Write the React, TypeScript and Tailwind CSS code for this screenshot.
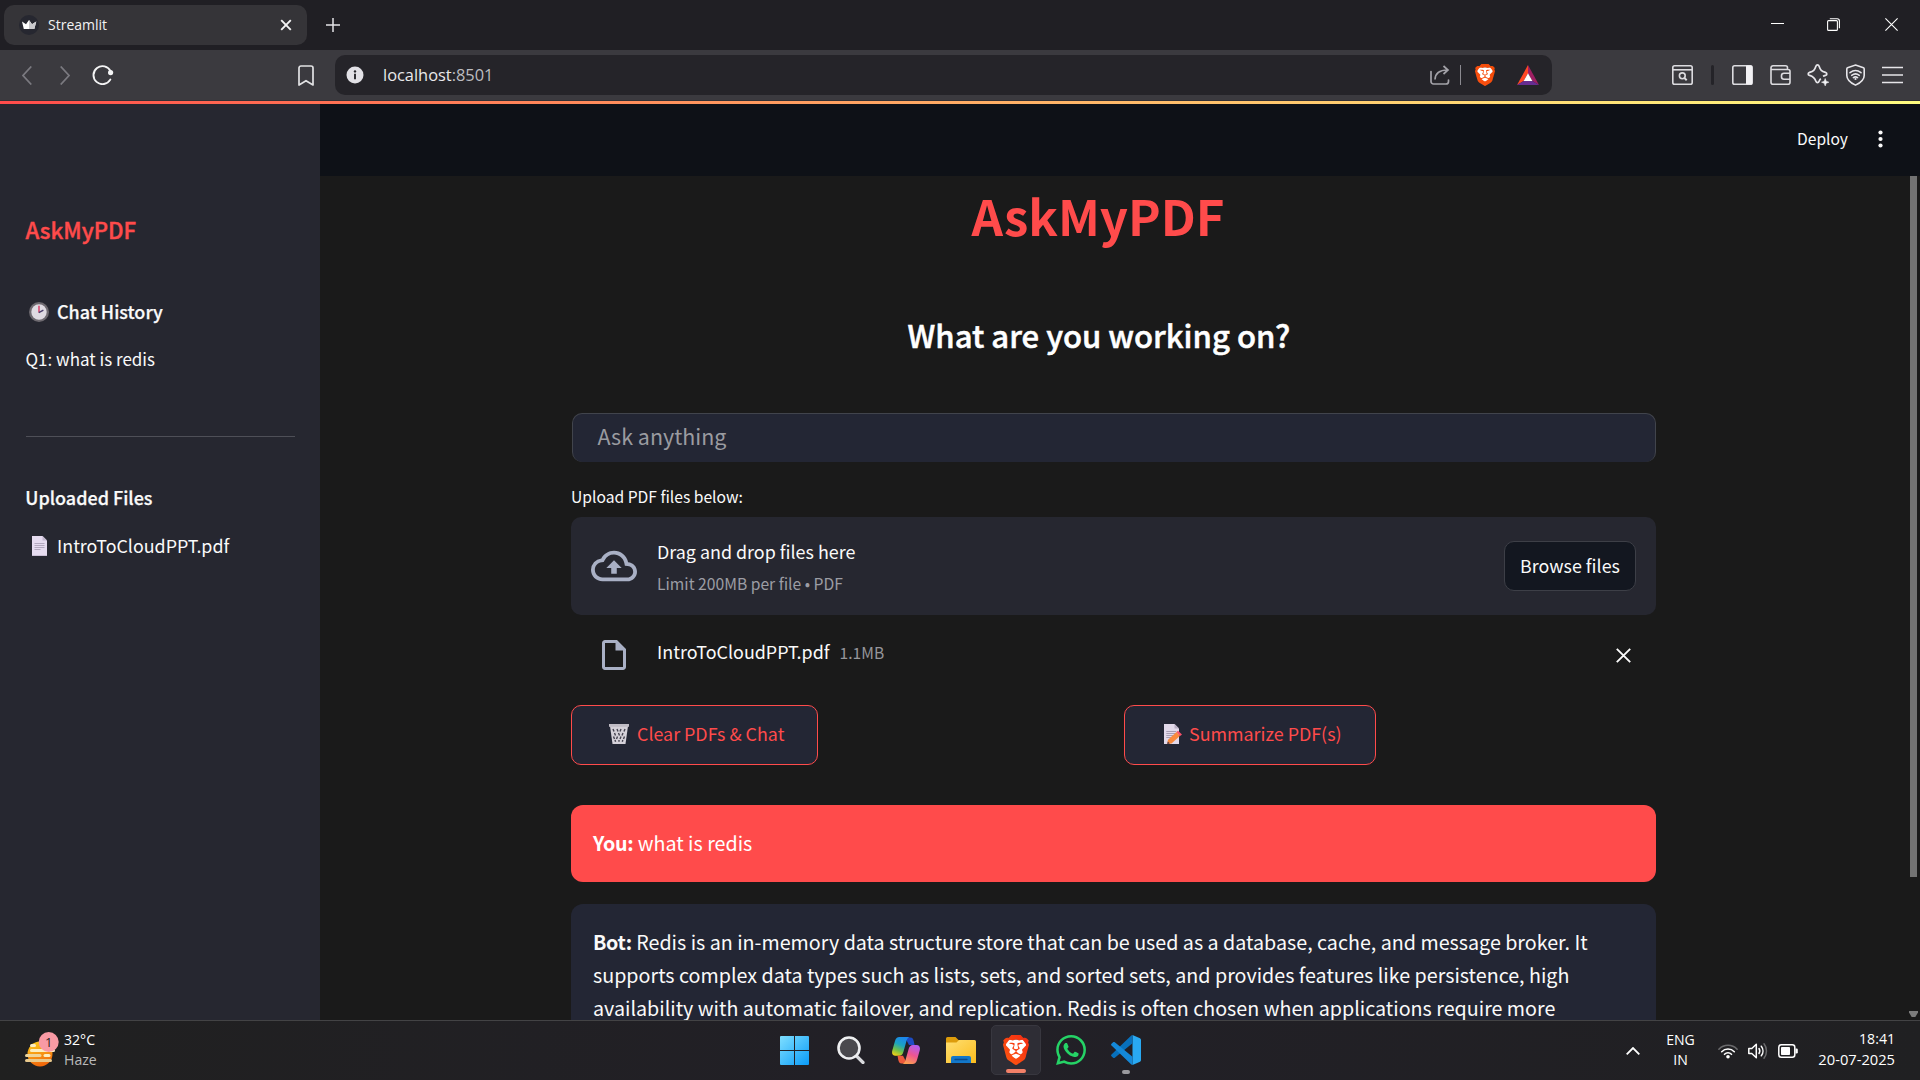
import type { ReactNode } from 'react';
import { SiWhatsapp } from 'react-icons/si';

const UI = "font-['Open_Sans',sans-serif]";

const BRAVE =
  'M15.68 0l2.096 2.38s1.84-.512 2.709.358c.868.87 1.584 1.638 1.584 1.638l-.562 1.381.715 2.047s-2.104 7.98-2.35 8.955c-.486 1.919-.818 2.66-2.198 3.633-1.38.972-3.884 2.66-4.293 2.916-.409.256-.92.692-1.38.692-.46 0-.97-.436-1.38-.692a185.796 185.796 0 01-4.293-2.916c-1.38-.973-1.712-1.714-2.197-3.633-.247-.975-2.351-8.955-2.351-8.955l.715-2.047-.562-1.381s.716-.768 1.585-1.638c.868-.87 2.708-.358 2.708-.358L8.321 0h7.36zm-3.679 14.936c-.14 0-1.038.317-1.758.69-.72.373-1.242.637-1.409.742-.167.104-.065.301.087.409.152.107 2.194 1.69 2.393 1.866.198.175.489.464.687.464.198 0 .49-.29.688-.464.198-.175 2.24-1.759 2.392-1.866.152-.108.254-.305.087-.41-.167-.104-.689-.368-1.41-.741-.72-.373-1.617-.69-1.757-.69zm0-11.278s-.409.001-1.022.206-1.278.46-1.584.46c-.307 0-2.581-.434-2.581-.434S4.119 7.152 4.119 7.849c0 .697.339.881.68 1.243l2.02 2.149c.192.203.59.511.356 1.066-.235.555-.58 1.26-.196 1.977.384.716 1.042 1.194 1.464 1.115.421-.08 1.412-.598 1.776-.834.364-.237 1.518-1.19 1.518-1.554 0-.365-1.193-1.02-1.413-1.168-.22-.15-1.226-.725-1.247-.95-.02-.227-.012-.293.284-.851.297-.559.831-1.304.742-1.8-.089-.495-.95-.753-1.565-.986-.615-.232-1.799-.671-1.947-.74-.148-.068-.11-.133.339-.175.448-.043 1.719-.212 2.292-.052.573.16 1.552.403 1.632.532.079.13.149.134.067.579-.081.445-.5 2.581-.541 2.96-.04.38-.12.63.288.724.409.094 1.097.256 1.333.256s.924-.162 1.333-.256c.408-.093.329-.344.288-.723-.04-.38-.46-2.516-.541-2.961-.082-.445-.012-.45.067-.579.08-.129 1.059-.372 1.632-.532.573-.16 1.845.009 2.292.052.449.042.487.107.339.175-.148.069-1.332.508-1.947.74-.615.233-1.476.49-1.565.986-.09.496.445 1.241.742 1.8.297.558.304.624.284.85-.02.226-1.026.802-1.247.95-.22.15-1.413.804-1.413 1.169 0 .364 1.154 1.317 1.518 1.554.364.236 1.355.755 1.776.834.422.079 1.08-.4 1.464-1.115.384-.716.039-1.422-.195-1.977-.235-.555.163-.863.355-1.066l2.02-2.149c.341-.362.68-.546.68-1.243 0-.697-2.695-3.96-2.695-3.96s-2.274.436-2.58.436c-.307 0-.972-.256-1.585-.461-.613-.205-1.022-.206-1.022-.206z';

function Brave({ className, from, to, id }: { className: string; from: string; to: string; id: string }) {
  return (
    <svg viewBox="1.8 0 20.4 24" preserveAspectRatio="none" className={className}>
      <defs>
        <linearGradient id={id} x1="0" y1="1" x2="1" y2="0">
          <stop offset="0" stopColor={from} />
          <stop offset="1" stopColor={to} />
        </linearGradient>
      </defs>
      <path d="M4 3.5h16v8l-3 7-5 2-5-2-3-7z" fill="#fff" />
      <path d={BRAVE} fill={`url(#${id})`} />
    </svg>
  );
}

/* ---------- browser chrome ---------- */

function TitleBar() {
  return (
    <div className={`flex h-[50px] shrink-0 items-center bg-[#201f24] pb-px ${UI}`}>
      <div className="ml-1 mt-px flex h-10 w-[303px] items-center rounded-[10px] bg-[#353438] pl-[15px] pr-[15px]">
        <svg viewBox="0 0 20 20" className="size-5">
          <circle cx="10" cy="10" r="10" fill="#262730" />
          <path d="M3 6.5l4 2.7L10 5l3 4.2 4.3-2.7-2 7.5H4.8z" fill="#fff" />
          <path d="M10 5l3 4.2 4.3-2.7-2 7.5H10z" fill="#c9c9cd" />
        </svg>
        <span className="ml-[9px] text-[14px] leading-5 text-[#f2f2f3]">Streamlit</span>
        <svg viewBox="0 0 12 12" className="ml-auto size-3" stroke="#f4f4f5" strokeWidth="1.9" fill="none">
          <path d="M1.2 1.2l9.6 9.6M10.8 1.2L1.2 10.8" />
        </svg>
      </div>
      <svg viewBox="0 0 14 14" className="ml-[19px] size-[14px]" stroke="#e4e4e6" strokeWidth="1.5" fill="none">
        <path d="M7 0v14M0 7h14" />
      </svg>
      <div className="ml-auto flex items-center pr-[22px]">
        <svg viewBox="0 0 13 13" className="size-[13px]" stroke="#fff" fill="none">
          <path d="M0 5.5h13" />
        </svg>
        <svg viewBox="0 0 13 13" className="ml-[43px] size-[13px]" stroke="#fff" strokeWidth="1.1" fill="none">
          <rect x=".6" y="2.6" width="9.8" height="9.8" rx="1" />
          <path d="M2.8 .7h7.4a2.2 2.2 0 0 1 2.2 2.2v7.4" />
        </svg>
        <svg viewBox="0 0 13 13" className="ml-[45px] size-[13px]" stroke="#fff" strokeWidth="1.1" fill="none">
          <path d="M.4 .4l12.2 12.2M12.6 .4L.4 12.6" />
        </svg>
      </div>
    </div>
  );
}

function ToolBar() {
  return (
    <div className={`flex h-[51px] shrink-0 items-center border-b border-[#323136] bg-[#3b3a3f] ${UI}`}>
      <svg viewBox="0 0 10 19" className="ml-[22px] h-[19px] w-[10px]" stroke="#7b7a80" strokeWidth="1.7" fill="none">
        <path d="M9.3 .5L1 9.5l8.3 9" />
      </svg>
      <svg viewBox="0 0 10 19" className="ml-[28px] h-[19px] w-[10px]" stroke="#7b7a80" strokeWidth="1.7" fill="none">
        <path d="M.7 .5L9 9.5l-8.3 9" />
      </svg>
      <svg viewBox="0 0 22 20" className="ml-[22px] h-[20px] w-[22px]" stroke="#f4f4f5" strokeWidth="1.9" fill="none">
        <path d="M18.6 6.2A9 9 0 1 0 18.3 14.6" strokeLinecap="round" />
        <circle cx="18.6" cy="7.6" r="2.6" fill="#f4f4f5" stroke="none" />
      </svg>
      <svg viewBox="0 0 16 21" className="ml-[184px] h-[21px] w-[16px]" stroke="#e2e2e4" strokeWidth="1.7" fill="none">
        <path d="M1 3a2 2 0 0 1 2-2h10a2 2 0 0 1 2 2v17l-7-4.3L1 20z" strokeLinejoin="round" />
      </svg>
      <div className="ml-[21px] flex h-10 w-[1217px] items-center rounded-[10px] bg-[#252429] pl-[11px] pr-[13px]">
        <svg viewBox="0 0 18 18" className="size-[18px]">
          <circle cx="9" cy="9" r="8.5" fill="#e2e1e6" />
          <circle cx="9" cy="5.4" r="1.2" fill="#252429" />
          <path d="M9 7.8v5.4" stroke="#252429" strokeWidth="1.9" />
        </svg>
        <span className="ml-[19px] pb-px text-[16.4px] leading-6 text-[#e9e9eb]">
          localhost<span className="text-[#bcbcc0]">:8501</span>
        </span>
        <svg viewBox="0 0 20 20" className="ml-auto size-5" stroke="#a3a2a8" strokeWidth="1.7" fill="none">
          <path d="M1 6.500v10a2.500 2.500 0 0 0 2.500 2.500h12.500a2.500 2.500 0 0 0 2.500-2.500v-1.500" strokeLinecap="round" />
          <path d="M5 14.500c.3-6 4-9.500 12.500-9.500M13.500 1l4.500 4-4.500 4" />
        </svg>
        <div className="ml-[10px] h-5 w-px bg-[#8b8a90]" />
        <Brave id="bv1" from="#fb5012" to="#f04a06" className="ml-[14px] h-[22px] w-5" />
        <svg viewBox="0 0 22 20" className="ml-[22px] h-5 w-[22px]">
          <path d="M11 0L0 20l6.600-4L11 8.200z" fill="#ff4724" />
          <path d="M11 0l11 20-6.600-4L11 8.200z" fill="#9e1f63" />
          <path d="M0 20h22l-6.600-4H6.600z" fill="#662d91" />
          <path d="M11 8.200L15.400 16H6.600z" fill="#fff" />
        </svg>
      </div>
      <div className="ml-auto flex items-center pr-[17px]">
        <svg viewBox="0 0 21 20" className="h-5 w-[21px]" stroke="#dcdbdf" strokeWidth="1.6" fill="none">
          <rect x=".8" y=".8" width="19.400" height="18.400" rx="1.800" />
          <path d="M1 4.800h19" />
          <circle cx="10.300" cy="10.800" r="2.900" />
          <path d="M12.300 12.900l2.400 2.400" strokeWidth="2" />
        </svg>
        <div className="ml-[18px] h-5 w-[2.500px] rounded-full bg-[#242328]" />
        <svg viewBox="0 0 21 20" className="ml-[18.500px] h-5 w-[21px]" stroke="#dcdbdf" strokeWidth="1.6" fill="none">
          <rect x=".8" y=".8" width="19.400" height="18.400" rx="1.800" />
          <path d="M14.500 1h5v18h-5z" fill="#f3f2f5" stroke="#f3f2f5" strokeWidth="1" />
        </svg>
        <svg viewBox="0 0 21 20" className="ml-[17px] h-5 w-[21px]" stroke="#dcdbdf" strokeWidth="1.6" fill="none">
          <path d="M1 4.500h17a2 2 0 0 1 2 2v10.700a2 2 0 0 1-2 2H3a2 2 0 0 1-2-2V2.800a2 2 0 0 1 2-2h12.500a2 2 0 0 1 2 2v1.500" />
          <path d="M20 8.200h-6a2.500 2.500 0 0 0-2.500 2.500v1a2.500 2.500 0 0 0 2.500 2.500h6" />
        </svg>
        <svg viewBox="0 0 22 22" className="ml-[16px] size-[22px]" stroke="#e6e5e9" strokeWidth="1.7" fill="none" strokeLinejoin="round">
          <path d="M13.800 14.600c-.7.600-1.200 1.300-1.700 2.700-.6 1.800-2.600 1.800-3.200 0-1.200-3.600-2.400-4.700-6.300-5.900-1.900-.6-1.900-2.400 0-3 3.900-1.200 5.100-2.300 6.300-6.100.6-1.800 2.600-1.800 3.200 0 1.200 3.800 2.400 4.900 6.300 6.100 1.900.6 1.900 2.400 0 3-.9.300-1.700.6-2.400.9" />
          <path d="M18.200 14.500l1 2.700 2.700 1-2.700 1-1 2.700-1-2.700-2.700-1 2.700-1z" fill="#f4f4f6" strokeWidth=".6" />
        </svg>
        <svg viewBox="0 0 19 22" className="ml-[17px] h-[22px] w-[19px]" stroke="#e6e5e9" strokeWidth="1.6" fill="none">
          <path d="M9.500 1l8 2.800c.5.2.7.6.7 1.100v6.500c0 4.300-3.800 7.400-8.700 9.700C4.600 18.800.8 15.700.8 11.400V4.900c0-.5.2-.9.7-1.100z" />
          <path d="M4 8.700c3.300-2.600 7.700-2.600 11 0M5.700 11.300c2.400-1.800 5.200-1.800 7.600 0M7.400 13.600c1.400-.9 2.800-.9 4.200 0" strokeLinecap="round" />
          <circle cx="9.500" cy="15" r="1.100" fill="#e6e5e9" stroke="none" />
        </svg>
        <svg viewBox="0 0 21 18" className="ml-[17px] h-[18px] w-[21px]" stroke="#e6e5e9" strokeWidth="1.7">
          <path d="M0 1.500h21M0 9h21M0 16.500h21" />
        </svg>
      </div>
    </div>
  );
}

/* ---------- emoji ---------- */

function ClockEmoji() {
  return (
    <svg viewBox="0 0 20 20" className="size-5">
      <circle cx="10" cy="10" r="10" fill="#6e6a70" />
      <circle cx="10" cy="10" r="7.700" fill="#dfdbe2" />
      <path d="M10 3.800V10.500" stroke="#d9436b" strokeWidth="1.500" />
      <path d="M9.800 10.600l4.600-2.500" stroke="#4b3f6c" strokeWidth="1.400" />
    </svg>
  );
}

function PageEmoji() {
  return (
    <svg viewBox="0 0 15 20" className="h-5 w-[15px]">
      <path d="M0 0h10.500L15 4.500V20H0z" fill="#e6dcf0" />
      <path d="M10.500 0v4.500H15z" fill="#c3b8cf" />
      <path d="M2.500 7.500h10M2.500 9.500h10M2.500 11.500h10M2.500 13.500h6" stroke="#b3a9bf" strokeWidth="1" />
      <path d="M0 19.500h15" stroke="#cabfd6" />
    </svg>
  );
}

function TrashEmoji() {
  return (
    <svg viewBox="0 0 20 20" className="h-5 w-5">
      <path d="M1 2h18l-2.500 18h-13z" fill="#d5d1d9" />
      <path d="M0 0h20v2.800H0z" fill="#c0bcc5" />
      <path
        d="M4 5l1 2.500M8 5l1 2.500M12 5l-1 2.500M16 5l-1 2.500M5.500 9l1 2.500M9.500 9l1 2.500M14 9l-1 2.500M4.500 12.500l1 2.500M8.500 12.500l-1 2.500M12 12.500l-1 2.500M15.500 12.500l-1 2.500M6 16l.6 1.800M10 16v1.800M13.800 16l-.5 1.800"
        stroke="#44424f"
        strokeWidth="1.400"
      />
    </svg>
  );
}

function MemoEmoji() {
  return (
    <svg viewBox="0 0 18 20" className="h-5 w-[18px]">
      <path d="M0 0h10.500L15 4.500V20H0z" fill="#e2d9ea" />
      <path d="M10.500 0v4.500H15z" fill="#b9afc4" />
      <path d="M2.300 7.500h10M2.300 9.500h10M2.300 11.500h8M2.300 13.500h5" stroke="#a79db2" strokeWidth="1" />
      <path d="M4 15.800L12.500 8l3.600 3.700-8.600 7.800-4.300.5z" fill="#f98a3c" />
      <path d="M12.500 8l1.500-1.200 4 3.600-1.900 1.500z" fill="#f8506a" />
      <path d="M3.200 20l.6-2.500 2 2z" fill="#4a3548" />
    </svg>
  );
}

/* ---------- app ---------- */

function Sidebar() {
  return (
    <aside className="flex w-80 shrink-0 flex-col bg-[#262730] pl-[26px] pr-[25px] pt-[110px] text-[#fafafa]">
      <div className="-ml-[0.5px] h-[30px] text-[22.2px] font-medium leading-[30px] text-[#ff4b4b] [-webkit-text-stroke:0.4px_currentColor]">
        AskMyPDF
      </div>
      <div className="mt-[52px] flex h-[30px] items-center text-[17.95px] font-medium leading-[30px] [-webkit-text-stroke:0.25px_currentColor]">
        <span className="ml-[3px] mr-2 pt-px">
          <ClockEmoji />
        </span>
        Chat History
      </div>
      <div className="-ml-[0.5px] mt-[18px] h-[30px] text-[17px] leading-[30px]">Q1: what is redis</div>
      <div className="mt-[62px] h-px shrink-0 bg-[#4e4f57]" />
      <div className="-ml-[0.7px] mt-[45px] h-[30px] text-[17.95px] font-medium leading-[30px] [-webkit-text-stroke:0.25px_currentColor]">
        Uploaded Files
      </div>
      <div className="mt-[18px] flex h-[30px] items-center text-[17.86px] leading-[30px]">
        <span className="ml-[6px] mr-[10px] pt-px">
          <PageEmoji />
        </span>
        IntroToCloudPPT.pdf
      </div>
    </aside>
  );
}

function ActionButton({ icon, label, className }: { icon: ReactNode; label: string; className: string }) {
  return (
    <button
      className={`flex h-[60px] items-center rounded-[10px] border border-[#ff4b4b] bg-[#232634] pb-[2px] text-[17.86px] text-[#ff4b4b] ${className}`}
    >
      {icon}
      <span className="pb-[2px] leading-6">{label}</span>
    </button>
  );
}

function Main() {
  return (
    <main className="flex min-w-0 flex-1 flex-col bg-[#1a1a1a]">
      <header className="flex h-[72px] shrink-0 items-center justify-end bg-[#0e1117] pb-1 pr-[37px]">
        <span className="text-[15.6px] leading-6 text-[#fafafa]">Deploy</span>
        <svg viewBox="0 0 5 18" className="ml-[30px] mt-px h-[18px] w-[5px]" fill="#fafafa">
          <circle cx="2.500" cy="2.500" r="2.100" />
          <circle cx="2.500" cy="9" r="2.100" />
          <circle cx="2.500" cy="15.500" r="2.100" />
        </svg>
      </header>
      <div className="flex min-h-0 flex-1">
        <div className="ml-[251px] flex w-[1085px] flex-col overflow-hidden text-[#fafafa]">
          <h1 className="h-[78px] shrink-0 pr-[31px] text-center text-[49.1px] font-bold leading-[78px] text-[#ff4b4b]">AskMyPDF</h1>
          <h2 className="mt-[51px] h-[60px] shrink-0 pr-[29px] text-center text-[31.100px] font-medium leading-[60px] text-white [-webkit-text-stroke:0.5px_currentColor]">
            What are you working on?
          </h2>
          <div className="ml-[0.5px] mt-[47.500px] flex h-[49.500px] shrink-0 items-center rounded-[10px] border border-b-0 border-[#41444c] bg-[#232634] pb-[3px] pl-[25px] text-[21.48px] leading-8 text-[#9a9ba0]">
            Ask anything
          </div>
          <div className="mt-[22px] h-[25px] shrink-0 text-[15.65px] leading-[25px]">Upload PDF files below:</div>
          <div className="mt-2 flex h-[98px] shrink-0 items-center rounded-[10px] bg-[#262730] pl-5 pr-5">
            <svg viewBox="0 0 24 24" className="size-[46px]" fill="#a9b0c5">
              <path d="M19.350 10.040A7.490 7.490 0 0012 4C9.110 4 6.600 5.640 5.350 8.040A5.994 5.994 0 000 14c0 3.310 2.690 6 6 6h13c2.760 0 5-2.240 5-5 0-2.640-2.050-4.780-4.650-4.960zM19 18H6c-2.210 0-4-1.790-4-4 0-2.050 1.530-3.760 3.560-3.970l1.070-.11.5-.95A5.469 5.469 0 0112 6c2.620 0 4.880 1.860 5.390 4.430l.3 1.500 1.530.11A2.980 2.980 0 0122 15c0 1.650-1.350 3-3 3zM8 13h2.550v3h2.900v-3H16l-4-4-4 4z" />
            </svg>
            <div className="ml-5 mt-[3px]">
              <div className="text-[17.9px] leading-8">Drag and drop files here</div>
              <div className="text-[15.68px] leading-[33px] text-[#9c9da4]">Limit 200MB per file • PDF</div>
            </div>
            <button className="ml-auto flex h-[50px] w-[132px] items-center justify-center rounded-[10px] border border-[#3d3f47] bg-[#131720] pb-[3px] text-[17.86px] leading-6">
              Browse files
            </button>
          </div>
          <div className="flex h-[90px] shrink-0 items-center pb-[10px] pl-[25px] pr-[25px]">
            <svg viewBox="0 0 24 24" className="size-9" fill="#a9b0c5">
              <path d="M14 2H6c-1.100 0-1.990.9-1.990 2L4 20c0 1.100.89 2 1.990 2H18c1.100 0 2-.9 2-2V8l-6-6zM6 20V4h7v5h5v11H6z" />
            </svg>
            <div className="ml-[25px] flex items-baseline pb-[7px] text-[17.9px] leading-8">
              IntroToCloudPPT.pdf
              <span className="ml-[10px] text-[15.600px] text-[#96969a]">1.1MB</span>
            </div>
            <svg viewBox="0 0 15 15" className="ml-auto size-[15px]" stroke="#fafafa" strokeWidth="1.900" fill="none">
              <path d="M.8 .8l13.400 13.400M14.200 .8L.8 14.200" />
            </svg>
          </div>
          <div className="flex shrink-0">
            <ActionButton
              className="w-[247px] pl-[37px]"
              label="Clear PDFs & Chat"
              icon={
                <span className="mr-2">
                  <TrashEmoji />
                </span>
              }
            />
            <ActionButton
              className="ml-[306px] w-[252px] pl-[39px]"
              label="Summarize PDF(s)"
              icon={
                <span className="mr-[7px]">
                  <MemoEmoji />
                </span>
              }
            />
          </div>
          <div className="mt-10 flex h-[77px] shrink-0 items-center whitespace-pre rounded-[12px] bg-[#ff4b4b] pb-[2px] pl-[22px] text-[19.7px] leading-[33px] text-white">
            <strong className="font-bold tracking-[-0.3px]">You:</strong> what is redis
          </div>
          <div className="mt-[22px] h-[200px] shrink-0 whitespace-nowrap rounded-[12px] bg-[#232634] pl-[22px] pt-[21px] text-[19.71px] leading-[33px] text-[#fafafa]">
            <strong className="font-bold tracking-[-0.3px]">Bot:</strong> Redis is an in-memory data structure store that can be used as a database, cache, and
            message broker. It
            <br />
            supports complex data types such as lists, sets, and sorted sets, and provides features like persistence, high
            <br />
            availability with automatic failover, and replication. Redis is often chosen when applications require more
          </div>
        </div>
        <div className="ml-auto flex w-[12px] flex-col justify-between">
          <div className="ml-[2px] h-[701px] w-[7px] bg-[#737373]" />
          <svg viewBox="0 0 9 6" className="mb-[3px] ml-px h-[6px] w-[9px]" fill="#7c7c7c">
            <path d="M0 0h9v1.500L6.300 6H2.700L0 1.500z" />
          </svg>
        </div>
      </div>
    </main>
  );
}

/* ---------- taskbar ---------- */

function Tile({ children, active, mark }: { children: ReactNode; active?: boolean; mark?: string }) {
  return (
    <div
      className={`relative flex size-[50px] items-center justify-center rounded-[5px] ${active ? 'border border-[#38373f] bg-[#2e2d35]' : ''}`}
    >
      {children}
      {mark && <div className={`absolute bottom-px left-1/2 h-[4px] -translate-x-1/2 rounded-full ${mark}`} />}
    </div>
  );
}

function TaskBar() {
  return (
    <footer
      className={`relative flex h-[60px] shrink-0 items-center border-t border-[#434345] bg-linear-to-r from-[#202020] via-[#222027] to-[#202022] text-[14.1px] leading-5 text-white ${UI}`}
    >
      <div className="relative mb-[2px] ml-[25px] h-[36px] w-[34px]">
        <svg viewBox="0 0 34 36" className="h-9 w-[34px]">
          <defs>
            <linearGradient id="sun" x1="0" y1="0" x2="0.300" y2="1">
              <stop offset="0" stopColor="#ffd21c" />
              <stop offset="1" stopColor="#f26a0c" />
            </linearGradient>
          </defs>
          <circle cx="15" cy="22" r="12.500" fill="url(#sun)" />
          <g fill="#fdeec0">
            <rect x="5" y="12" width="6" height="3" rx="1.500" />
            <rect x="5" y="17" width="25" height="3" rx="1.500" />
            <rect x="0" y="22" width="16.500" height="3" rx="1.500" fill="#efd59a" />
            <rect x="18.500" y="22" width="7" height="3" rx="1.500" />
            <rect x="0" y="27" width="27" height="3" rx="1.500" fill="#e9c98c" />
          </g>
          <circle cx="23.700" cy="10" r="10" fill="#f99aa4" />
        </svg>
        <span className="absolute left-[20px] top-0 text-[13px] leading-5 text-[#2a1f21]">1</span>
      </div>
      <div className="mb-[2px] ml-[5px]">
        <div>32°C</div>
        <div className="text-[#b9b9b9]">Haze</div>
      </div>

      <div className="absolute left-[771px] top-1 flex gap-[5px]">
        <Tile>
          <svg viewBox="0 0 29 29" className="mr-[3px] size-[29px]">
            <defs>
              <linearGradient id="win" x1="0" y1="0" x2="1" y2="1">
                <stop offset="0" stopColor="#7fdfff" />
                <stop offset="1" stopColor="#0a9bf8" />
              </linearGradient>
            </defs>
            <path
              d="M1 0h13v14H0V1a1 1 0 0 1 1-1zM15 0h13a1 1 0 0 1 1 1v13H15zM0 15h14v14H1a1 1 0 0 1-1-1zM15 15h14v13a1 1 0 0 1-1 1H15z"
              fill="url(#win)"
            />
          </svg>
        </Tile>
        <Tile>
          <svg viewBox="0 0 28 28" className="size-7" fill="none">
            <path d="M19 19.500l7 7" stroke="#d9dadd" strokeWidth="3.200" strokeLinecap="round" />
            <circle cx="12" cy="12" r="10.500" fill="#4a494e" stroke="#eeeff1" strokeWidth="2.600" />
          </svg>
        </Tile>
        <Tile>
          <svg viewBox="0 0 28 27" className="h-[27px] w-7">
            <defs>
              <linearGradient id="cpa" x1="0.600" y1="0" x2="0.200" y2="1">
                <stop offset="0" stopColor="#1c86ee" />
                <stop offset="0.400" stopColor="#1ba3c0" />
                <stop offset="0.700" stopColor="#6fc04a" />
                <stop offset="1" stopColor="#f5d115" />
              </linearGradient>
              <linearGradient id="cpb" x1="0.700" y1="0" x2="0.300" y2="1">
                <stop offset="0" stopColor="#b05cf2" />
                <stop offset="0.500" stopColor="#ee5590" />
                <stop offset="1" stopColor="#fda04f" />
              </linearGradient>
            </defs>
            <path d="M13 .5h5.500c2 0 2.700 1.500 3.300 4l.8 3.500H17z" fill="#1d4bc4" />
            <path d="M7.500 0h10c-2 .6-2.600 2.500-3.300 5l-2.700 9.500c-.8 3-2 4.300-4.500 4.300H3.500C.5 18.800-.5 16.500.3 13.500L3 4C3.800 1.300 5 0 7.500 0z" fill="url(#cpa)" />
            <path d="M15 26.500H9.500c-2 0-2.700-1.500-3.300-4L5.500 18.800H11z" fill="#ee5a3c" />
            <path d="M20.500 27h-10c2-.6 2.600-2.500 3.300-5l2.700-9.500c.8-3 2-4.500 4.500-4.500h3.500c3 0 4 2.500 3.200 5.500L25 23c-.8 2.700-2 4-4.500 4z" fill="url(#cpb)" />
          </svg>
        </Tile>
        <Tile>
          <svg viewBox="0 0 30 27" className="h-[27px] w-[30px]">
            <defs>
              <linearGradient id="fold" x1="0" y1="0" x2="1" y2="1">
                <stop offset="0" stopColor="#ffdf72" />
                <stop offset="1" stopColor="#fbbc1d" />
              </linearGradient>
            </defs>
            <path d="M0 1.500A1.500 1.500 0 0 1 1.500 0h8l3 3H28v5H0z" fill="#dd9c0b" />
            <path d="M0 5.500h10.500L13 3h15.500A1.500 1.500 0 0 1 30 4.500V26H0z" fill="url(#fold)" />
            <path d="M5 26v-5a2 2 0 0 1 2-2h16a2 2 0 0 1 2 2v5z" fill="#1377c9" />
            <path d="M9 22.500h12" stroke="#0a4a8c" strokeWidth="1.300" strokeLinecap="round" />
          </svg>
        </Tile>
        <Tile active mark="w-5 bg-[#f28068]">
          <Brave id="bv2" from="#ff5a10" to="#f32a12" className="h-[30px] w-[26px]" />
        </Tile>
        <Tile>
          <SiWhatsapp size={30} color="#25d366" />
        </Tile>
        <Tile mark="w-2 bg-[#9a999e]">
          <svg viewBox="0 0 30 30" className="size-[30px]">
            <path d="M21.500 0L29 3.300c.6.300 1 .9 1 1.600v20.200c0 .7-.4 1.300-1 1.600L21.500 30z" fill="#29a9f2" />
            <path d="M21.500 0v8.200L3.800 22.700c-.5.400-1.200.4-1.700 0L.5 21.200c-.6-.5-.6-1.300 0-1.800L20.300.6z" fill="#0870bc" />
            <path d="M21.500 30v-8.200L3.800 7.300c-.5-.4-1.200-.4-1.700 0L.5 8.800c-.6.500-.6 1.300 0 1.800l19.800 18.800z" fill="#1488d8" />
          </svg>
        </Tile>
      </div>

      <div className="ml-auto flex items-center pr-[25px]">
        <svg viewBox="0 0 14 8" className="h-2 w-[14px]" stroke="#fff" strokeWidth="1.800" fill="none">
          <path d="M.7 7.300L7 1l6.300 6.300" />
        </svg>
        <div className="mb-px ml-[26px] w-[29px] text-center">
          <div>ENG</div>
          <div>IN</div>
        </div>
        <svg viewBox="0 0 20 16" className="ml-[23px] h-4 w-5" fill="none" strokeWidth="1.600" strokeLinecap="round">
          <path d="M.9 6.200a12.500 12.500 0 0 1 18.200 0" stroke="#6a6a6c" />
          <path d="M3.700 8.700a8.800 8.800 0 0 1 12.600 0M6.500 11.300a5 5 0 0 1 7 0" stroke="#fff" />
          <circle cx="10" cy="13.800" r="1.800" fill="#fff" />
        </svg>
        <svg viewBox="0 0 20 18" className="ml-[10px] h-[18px] w-5" fill="none" strokeWidth="1.500" strokeLinecap="round" strokeLinejoin="round">
          <path d="M.8 6.500v5h3l4.500 4.200V2.300L3.800 6.500z" stroke="#fff" />
          <path d="M11 6.500c1 1.500 1 3.500 0 5M13.300 4.200c2.200 2.800 2.200 6.800 0 9.600" stroke="#fff" />
          <path d="M16 1.800c3.300 4.200 3.300 10.200 0 14.400" stroke="#6a6a6c" />
        </svg>
        <svg viewBox="0 0 20 14" className="ml-[10px] h-[14px] w-5" fill="none">
          <rect x=".8" y=".8" width="16" height="12.400" rx="2.500" stroke="#fff" strokeWidth="1.500" />
          <rect x="3" y="3" width="9" height="8" rx=".8" fill="#fff" />
          <path d="M17.500 4.500h1a1.300 1.300 0 0 1 1.300 1.300v2.400a1.300 1.300 0 0 1-1.300 1.300h-1z" fill="#fff" />
        </svg>
        <div className="mb-[3px] ml-[20px] w-[77px] text-right">
          <div>18:41</div>
          <div className="text-[14.7px]">20-07-2025</div>
        </div>
      </div>
    </footer>
  );
}

export default function App() {
  return (
    <div className="flex h-[1080px] w-[1920px] flex-col overflow-hidden bg-[#1a1a1a] font-['Noto_Sans_CJK_JP',sans-serif]">
      <TitleBar />
      <ToolBar />
      <div className="h-[3px] shrink-0 bg-linear-to-r from-[#ff4b4b] to-[#fffd80]" />
      <div className="flex min-h-0 flex-1">
        <Sidebar />
        <Main />
      </div>
      <TaskBar />
    </div>
  );
}
